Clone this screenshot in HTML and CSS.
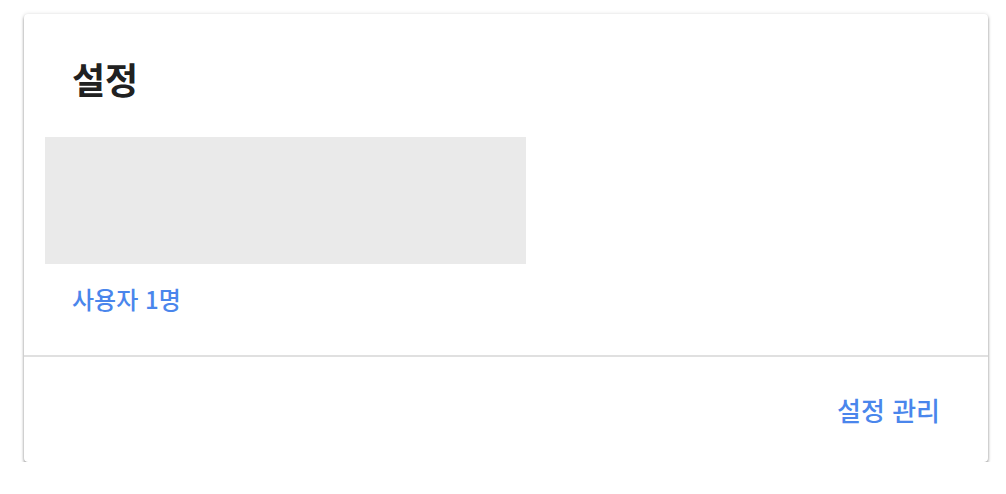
FILE: index.html
```html
<!DOCTYPE html>
<html lang="ko">
<head>
<meta charset="utf-8">
<link rel="stylesheet" href="styles.css">
</head>
<body>
<div class="card">
  <div class="card-body">
    <h1 class="title">설정</h1>
    <div class="placeholder"></div>
    <a class="users">사용자 1명</a>
  </div>
  <div class="card-actions">
    <a class="action">설정 관리</a>
  </div>
</div>
</body>
</html>
```
FILE: styles.css
```css
* { box-sizing: border-box; }
html, body { margin: 0; padding: 0; background: #fff; }
body {
  font-family: "Noto Sans CJK KR", "Noto Sans", sans-serif;
  padding: 14px 18px 0 24px;
}
.card {
  width: 964px;
  height: 448px;
  background: #fff;
  border-radius: 4px;
  box-shadow: 0 2px 3px rgba(0,0,0,0.4), 0 0 4px rgba(0,0,0,0.12);
  display: flex;
  flex-direction: column;
}
.card-body {
  padding: 40px 0 0 21px;
  height: 343px;
  border-bottom: 2px solid #e0e0e0;
  display: flex;
  flex-direction: column;
}
.title {
  margin: 0 0 0 27px;
  font-size: 36px;
  line-height: 48px;
  font-weight: 700;
  color: #212121;
}
.placeholder {
  margin-top: 35px;
  width: 481px;
  height: 127px;
  background: #eaeaea;
}
.users {
  margin: 18px 0 0 27px;
  font-size: 24px;
  line-height: 34px;
  color: #4a86ec;
  font-weight: 500;
}
.card-actions {
  flex: 1;
  display: flex;
  align-items: center;
  justify-content: flex-end;
  padding-right: 48px;
}
.action {
  font-size: 26px;
  font-weight: 500;
  color: #4a86ec;
}
```
